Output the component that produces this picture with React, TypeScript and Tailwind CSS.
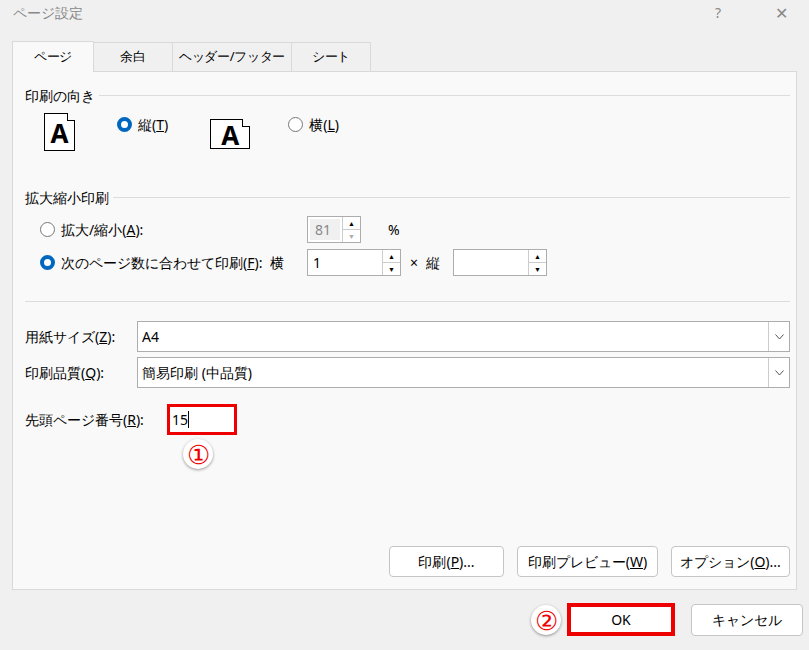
import React from "react";

const Radio = ({ on }: { on?: boolean }) =>
  on ? (
    <span className="inline-block w-[15px] h-[15px] rounded-full border-[4px] border-[#0067c0] bg-white" />
  ) : (
    <span className="inline-block w-[15px] h-[15px] rounded-full border border-[#777] bg-white" />
  );

const Spin = ({ w, val, disabled }: { w: string; val?: string; disabled?: boolean }) => (
  <div className={`flex border border-[#adadad] bg-white h-[27px] ${w}`}>
    <div className={`flex-1 flex items-center pl-[5px] ${disabled ? "bg-[#f0f0f0] text-[#888] m-[2px] pl-[3px]" : ""}`}>{val}</div>
    <div className="w-[18px] flex flex-col border-l border-[#ccc]">
      <div className="flex-1 flex items-center justify-center text-[7px] leading-none">▲</div>
      <div className={`flex-1 flex items-center justify-center text-[7px] leading-none border-t border-[#ccc] ${disabled ? "text-[#aaa]" : ""}`}>▼</div>
    </div>
  </div>
);

const Page = ({ land }: { land?: boolean }) => (
  <div className={`relative bg-white border border-black flex items-center justify-center ${land ? "w-[40px] h-[30px]" : "w-[31px] h-[38px]"}`}>
    <div className="absolute -top-px -right-px w-[8px] h-[8px] bg-[#f9f9f9] border-l border-b border-black" />
    <span className="[font-family:'Liberation_Serif','DejaVu_Serif',serif] font-bold text-[26px] leading-none mt-[2px]">A</span>
  </div>
);

const Select = ({ text }: { text: string }) => (
  <div className="flex-1 flex h-[31px] border border-[#adadad] bg-white items-center">
    <div className="flex-1 pl-[4px]">{text}</div>
    <div className="w-[21px] h-full border-l border-[#ccc] flex items-center justify-center">
      <svg width="9" height="6" viewBox="0 0 9 6"><path d="M0.5 0.5 L4.5 5 L8.5 0.5" fill="none" stroke="#555" /></svg>
    </div>
  </div>
);

const Btn = ({ children, w, cls = "" }: { children: React.ReactNode; w: string; cls?: string }) => (
  <div className={`h-[31px] ${w} border border-[#c5c5c5] rounded-[4px] bg-white flex items-center justify-center ${cls}`}>{children}</div>
);

const Circ = ({ n }: { n: string }) => (
  <div className="w-[30px] h-[30px] rounded-full bg-white shadow-[0_1px_3px_rgba(0,0,0,0.4)] flex items-center justify-center text-[#e00] text-[26px] font-normal leading-none">{n}</div>
);

export default function App() {
  return (
    <div className="w-[809px] h-[650px] bg-[#f0f0f0] text-[14px] text-black overflow-hidden font-['Noto_Sans_CJK_JP','Noto_Sans',sans-serif]">
      <div className="h-[25px] flex items-center pl-[13px] text-[#888]">
        <span className="flex-1">ページ設定</span>
        <span className="w-[40px] text-center mr-[28px]">?</span>
        <span className="w-[30px] text-center mr-[13px] text-[16px]">✕</span>
      </div>
      <div className="pl-[12px] pr-[12px]">
        <div className="flex h-[46px] items-end text-[13px] tracking-tight">
          <div className="w-[82px] h-[31px] bg-[#f9f9f9] border border-b-0 border-[#d9d9d9] flex items-center justify-center relative top-px">ページ</div>
          <div className="w-[79px] h-[29px] border border-l-0 border-b-0 border-[#d9d9d9] flex items-center justify-center">余白</div>
          <div className="w-[119px] h-[29px] border border-l-0 border-b-0 border-[#d9d9d9] flex items-center justify-center">ヘッダー/フッター</div>
          <div className="w-[79px] h-[29px] border border-l-0 border-b-0 border-[#d9d9d9] flex items-center justify-center">シート</div>
        </div>
        <div className="h-[519px] bg-[#f9f9f9] border border-[#d9d9d9] pl-[12px] pr-[6px] flex flex-col">
          <div className="flex items-center mt-[13px] h-[20px]">
            <span className="pr-[4px]">印刷の向き</span>
            <div className="flex-1 border-t border-[#dcdcdc]" />
          </div>
          <div className="flex items-center ml-[19px] mt-[5px] h-[48px]">
            <div className="self-start mt-[3px]"><Page /></div>
            <div className="flex items-center gap-[6px] ml-[42px] self-start mt-[4px]"><Radio on /><span>縦(<u>T</u>)</span></div>
            <div className="ml-[42px]"><Page land /></div>
            <div className="flex items-center gap-[6px] ml-[38px] self-start mt-[4px]"><Radio /><span>横(<u>L</u>)</span></div>
          </div>
          <div className="flex items-center mt-[29px] h-[20px]">
            <span className="pr-[4px]">拡大縮小印刷</span>
            <div className="flex-1 border-t border-[#dcdcdc]" />
          </div>
          <div className="flex items-center ml-[15px] mt-[9px] h-[27px]">
            <div className="flex items-center gap-[6px] w-[267px]"><Radio /><span>拡大/縮小(<u>A</u>):</span></div>
            <Spin w="w-[54px]" val="81" disabled />
            <span className="ml-[27px]">%</span>
          </div>
          <div className="flex items-center ml-[15px] mt-[6px] h-[27px]">
            <div className="flex items-center gap-[6px] w-[267px]"><Radio on /><span>次のページ数に合わせて印刷(<u>F</u>):&nbsp;&nbsp;横</span></div>
            <Spin w="w-[94px]" val="1" />
            <span className="ml-[9px]">×</span>
            <span className="ml-[8px]">縦</span>
            <div className="ml-[13px]"><Spin w="w-[94px]" /></div>
          </div>
          <div className="border-t border-[#dcdcdc] mt-[25px]" />
          <div className="flex items-center mt-[19px]">
            <span className="w-[112px]">用紙サイズ(<u>Z</u>):</span>
            <Select text="A4" />
          </div>
          <div className="flex items-center mt-[5px]">
            <span className="w-[112px]">印刷品質(<u>Q</u>):</span>
            <Select text="簡易印刷 (中品質)" />
          </div>
          <div className="flex items-center mt-[16px]">
            <span className="w-[142px]">先頭ページ番号(<u>R</u>):</span>
            <div className="w-[70px] h-[31px] border-[3px] border-[#e00] bg-white flex items-center pl-[2px]">15<span className="inline-block w-px h-[17px] bg-black" /></div>
          </div>
          <div className="ml-[158px] mt-[4px]"><Circ n="①" /></div>
          <div className="flex-1" />
          <div className="flex justify-end gap-[13px] mb-[12px]">
            <Btn w="w-[115px]">印刷(<u>P</u>)...</Btn>
            <Btn w="w-[141px]">印刷プレビュー(<u>W</u>)</Btn>
            <Btn w="w-[119px]">オプション(<u>O</u>)...</Btn>
          </div>
        </div>
        <div className="flex justify-end items-center mt-[13px] gap-[16px] -mr-[6px]">
          <Circ n="②" />
          <div className="h-[33px] w-[108px] border-[4px] border-[#e00] bg-white flex items-center justify-center -ml-[10px]">OK</div>
          <Btn w="w-[112px]" cls="h-[32px]">キャンセル</Btn>
        </div>
      </div>
    </div>
  );
}
